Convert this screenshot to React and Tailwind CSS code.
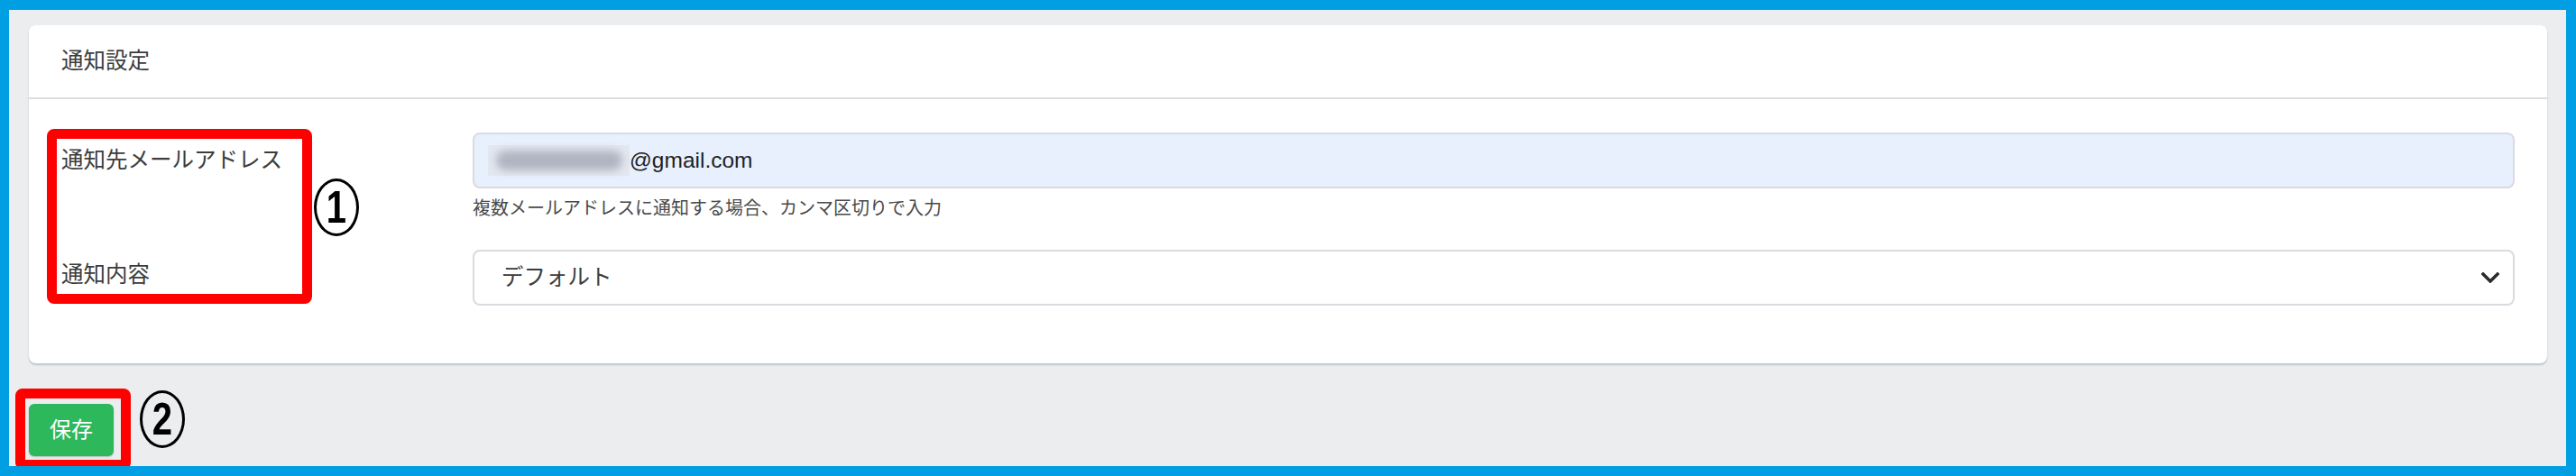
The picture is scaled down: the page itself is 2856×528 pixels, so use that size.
import React from 'react';

const FONT = "font-['Liberation_Sans','Noto_Sans_CJK_JP',sans-serif]";

function Marker({ n }) {
  return (
    <div className="flex h-[64px] w-[50px] items-center justify-center rounded-[50%] border-[3px] border-black">
      <span className="text-[50px] font-black leading-none text-black [transform:scaleX(0.8)]">
        {n}
      </span>
    </div>
  );
}

export default function App() {
  return (
    <div
      className={`relative h-[528px] w-[2856px] overflow-hidden border-b-[11px] border-l-[10px] border-r-[11px] border-t-[11px] border-[#009fe3] bg-[#ebedef] ${FONT}`}
    >
      <div className="pl-[22px] pr-[21px] pt-[17px]">
        {/* Card */}
        <div className="rounded-[8px] bg-white shadow-[0_2px_2px_rgba(60,75,100,0.25)]">
          <div className="flex h-[82px] items-center border-b-[2px] border-[#dcdde2] px-[36px] text-[24.5px] text-[#3c3c3c]">
            通知設定
          </div>

          <div className="grid grid-cols-[456px_1fr] px-[36px] pb-[64px] pt-[37px] text-[24.5px] text-[#3c3c3c]">
            {/* Email row */}
            <div className="flex h-[62px] items-center">通知先メールアドレス</div>
            <div>
              <div className="flex h-[62px] items-center rounded-[8px] border-[2px] border-[#dadbe0] bg-[#e8f0fe] pl-[15px] text-[#1f1f1f]">
                <span className="flex h-[34px] w-[157px] items-center justify-center bg-[#e3e8f0]">
                  <span className="h-[22px] w-[140px] rounded-full bg-[#aeb5c1] blur-[5px]" />
                </span>
                <span>@gmail.com</span>
              </div>
              <p className="mt-[8px] text-[20px] leading-[28px] text-[#4a4a4a]">
                複数メールアドレスに通知する場合、カンマ区切りで入力
              </p>
            </div>

            {/* Content row */}
            <div className="mt-[32px] flex h-[56px] items-center">通知内容</div>
            <div className="mt-[32px]">
              <div className="flex h-[62px] items-center justify-between rounded-[8px] border-[2px] border-[#dadbe0] bg-white pl-[30px] pr-[8px]">
                <span>デフォルト</span>
                <svg width="20" height="12" viewBox="0 0 20 12" className="mr-[7px]">
                  <path
                    d="M2 2l8 8 8-8"
                    fill="none"
                    stroke="#2b2b2b"
                    strokeWidth="3.5"
                    strokeLinecap="square"
                  />
                </svg>
              </div>
            </div>
          </div>
        </div>

        {/* Save */}
        <div className="mt-[45px] flex">
          <button className="h-[58px] w-[94px] rounded-[6px] bg-[#2eb85c] text-[24px] text-white shadow-[0_1px_2px_rgba(0,0,0,0.2)]">
            保存
          </button>
        </div>
      </div>

      {/* Annotations */}
      <div className="absolute left-[42px] top-[132px] h-[194px] w-[294px] rounded-[8px] border-[11px] border-[#ff0000]" />
      <div className="absolute left-[338px] top-[187px]">
        <Marker n="1" />
      </div>
      <div className="absolute left-[7px] top-[420px] h-[90px] w-[128px] rounded-[8px] border-[11px] border-[#ff0000]" />
      <div className="absolute left-[145px] top-[422px]">
        <Marker n="2" />
      </div>
    </div>
  );
}
